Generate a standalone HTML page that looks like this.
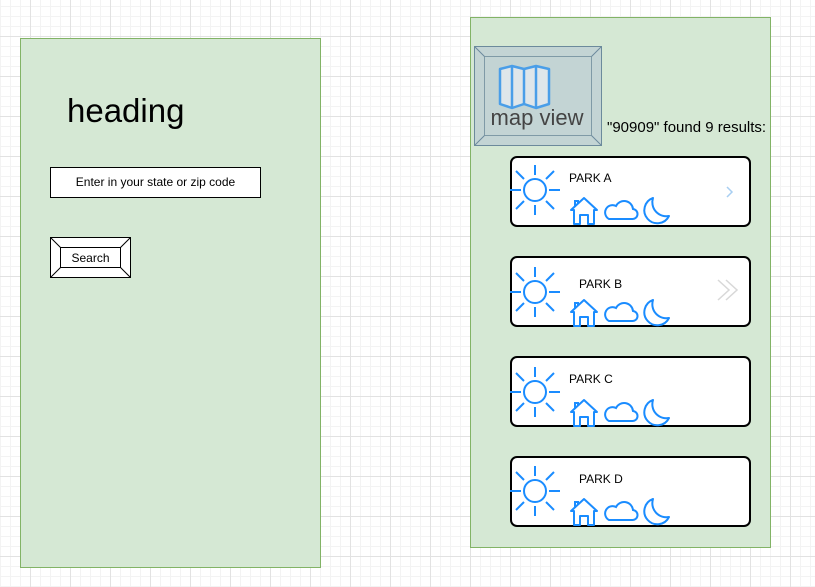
<!DOCTYPE html>
<html><head><style>
body{margin:0;width:815px;height:587px;position:relative;overflow:hidden;font-family:"Liberation Sans",Arial,sans-serif;
background-color:#fff;
background-image:linear-gradient(to right,#e2e2e2 1px,transparent 1px),linear-gradient(to bottom,#e2e2e2 1px,transparent 1px),linear-gradient(to right,#f3f3f3 1px,transparent 1px),linear-gradient(to bottom,#f3f3f3 1px,transparent 1px);
background-size:40px 40px,40px 40px,10px 10px,10px 10px;
background-position:30px 36px,30px 36px,0 6px,0 6px;}
.panel{position:absolute;background:#d5e8d4;border:1px solid #82b366;box-sizing:border-box}
.card{position:absolute;left:510px;width:241px;height:71px;background:#fff;border:2px solid #000;border-radius:7px;box-sizing:border-box}
.card svg{position:absolute;left:-2px;top:-2px}
.card .t{position:absolute;font-size:12px;color:#000}
</style></head><body>
<div class="panel" style="left:20px;top:38px;width:301px;height:530px"></div>
<div style="position:absolute;left:67px;top:92px;font-size:33px">heading</div>
<div style="position:absolute;left:50px;top:167px;width:211px;height:31px;border:1px solid #000;background:#fff;box-sizing:border-box;font-size:12px;text-align:center;line-height:29px">Enter in your state or zip code</div>
<svg style="position:absolute;left:50px;top:237px" width="81" height="41"><rect x="0.5" y="0.5" width="80" height="40" fill="#fff" stroke="#000"/><rect x="10.5" y="10.5" width="60" height="20" fill="#fff" stroke="#000"/><path d="M0.5 0.5L10.5 10.5M80.5 0.5L70.5 10.5M0.5 40.5L10.5 30.5M80.5 40.5L70.5 30.5" stroke="#000"/><text x="40.5" y="25" font-size="12" text-anchor="middle" font-family="Liberation Sans">Search</text></svg>

<div class="panel" style="left:470px;top:17px;width:301px;height:531px"></div>
<svg style="position:absolute;left:474px;top:46px" width="128" height="100"><rect x="0.5" y="0.5" width="127" height="99" fill="#c3d4d4" stroke="#6c8a9c"/><rect x="10.5" y="10.5" width="107" height="79" fill="#c3d4d4" stroke="#7f9aa6"/><path d="M0.5 0.5L10.5 10.5M127.5 0.5L117.5 10.5M0.5 99.5L10.5 89.5M127.5 99.5L117.5 89.5" stroke="#6c8a9c"/>
<path d="M26 23L26 58L38 62L50 58L62 62L75 58L75 23L62 20L50 23L38 20Z" fill="#dfe6ea" stroke="#4a9ee8" stroke-width="2.5" stroke-linejoin="round"/><path d="M38 20V62M50 23V58M62 20V62" stroke="#4a9ee8" stroke-width="2.5"/>
<text x="63" y="79" font-size="22" text-anchor="middle" fill="#444" font-family="Liberation Sans">map view</text></svg>
<div style="position:absolute;left:607px;top:119px;font-size:15px">"90909" found 9 results:</div>

<div class="card" style="top:156px"><svg width="241" height="71"><g id="ic" fill="none" stroke="#1a8cff" stroke-width="2"><circle cx="25" cy="34" r="11"/><path d="M0 34H11M39 34H50M25 9V19M25 49V59M14 23L6 15M36 23L44 15M14 45L6 53M36 45L44 53"/><path d="M64 68V54H61L74 42L87 54H84V68H78V59H70V68Z" stroke-linejoin="round"/><path d="M65 51V45h3v3"/><path d="M99 63H122A5 5 0 0 0 123 53A9 9 0 0 0 106 50A6 6 0 0 0 99 63Z"/><path d="M143 42A13 13 0 1 0 159 60A14 14 0 0 1 143 42Z" stroke-linejoin="round"/></g><path d="M217 31L222 36L217 41" stroke="#a8cff2" stroke-width="1.5" fill="none"/></svg><div class="t" style="left:57px;top:13px">PARK A</div></div>
<div class="card" style="top:256px"><svg width="241" height="71"><use href="#ic" transform="translate(0,2)"/><path d="M208 24L219 34L208 44M216 24L227 34L216 44" stroke="#d8d8d8" stroke-width="1.5" fill="none"/></svg><div class="t" style="left:67px;top:19px">PARK B</div></div>
<div class="card" style="top:356px"><svg width="241" height="71"><use href="#ic" transform="translate(0,2)"/></svg><div class="t" style="left:57px;top:14px">PARK C</div></div>
<div class="card" style="top:456px"><svg width="241" height="71"><use href="#ic" transform="translate(0,1)"/></svg><div class="t" style="left:67px;top:14px">PARK D</div></div>
</body></html>
